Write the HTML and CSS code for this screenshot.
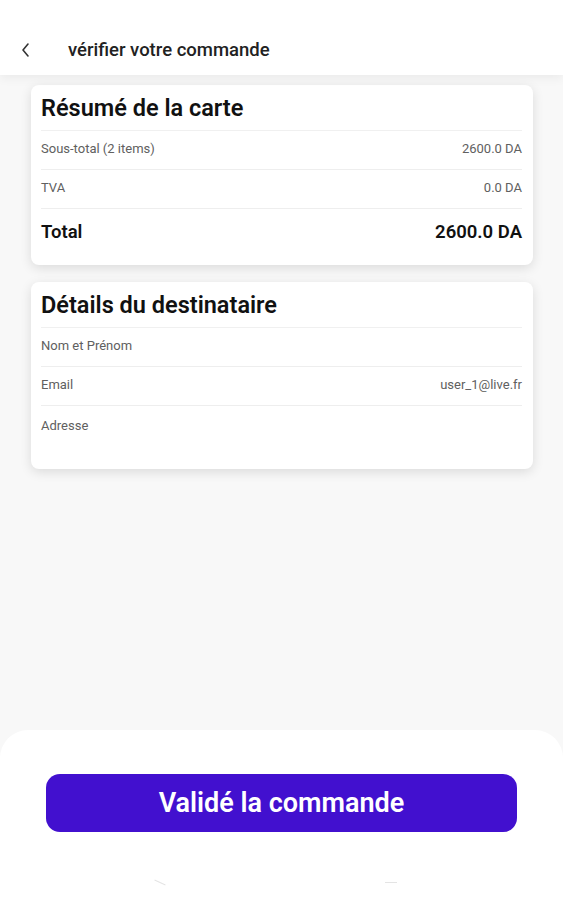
FILE: index.html
```html
<!DOCTYPE html>
<html lang="fr">
<head>
    <meta charset="UTF-8">
    <meta name="viewport" content="width=device-width, initial-scale=1.0">
    <title>vérifier votre commande</title>
    <link rel="stylesheet" href="styles.css">
</head>
<body>
    <!-- Top bar -->
    <header class="topbar">
        <button class="back-btn" aria-label="Retour">
            <svg width="12" height="16" viewBox="0 0 12 16">
                <path d="M8 2 L3 8 L8 14" fill="none" stroke="#333" stroke-width="1.6" stroke-linecap="round" stroke-linejoin="round"/>
            </svg>
        </button>
        <span class="topbar-title">vérifier votre commande</span>
    </header>

    <main class="content">
        <!-- Cart summary -->
        <section class="card">
            <h2 class="card-title">Résumé de la carte</h2>
            <div class="row">
                <span>Sous-total (2 items)</span>
                <span>2600.0 DA</span>
            </div>
            <div class="row">
                <span>TVA</span>
                <span>0.0 DA</span>
            </div>
            <div class="row total">
                <span>Total</span>
                <span>2600.0 DA</span>
            </div>
        </section>

        <!-- Recipient -->
        <section class="card">
            <h2 class="card-title">Détails du destinataire</h2>
            <div class="row">
                <span>Nom et Prénom</span>
                <span></span>
            </div>
            <div class="row">
                <span>Email</span>
                <span>user_1@live.fr</span>
            </div>
            <div class="row last">
                <span>Adresse</span>
                <span></span>
            </div>
        </section>
    </main>

    <footer class="sheet">
        <button class="confirm-btn">Validé la commande</button>
        <div class="sheet-marks">
            <span class="mark mark-left"></span>
            <span class="mark mark-right"></span>
        </div>
    </footer>
</body>
</html>
```

FILE: styles.css
```css
* {
    box-sizing: border-box;
}

body {
    font-family: Roboto, "Liberation Sans", Arial, sans-serif;
    margin: 0;
    padding: 0;
    width: 563px;
    height: 900px;
    background-color: #f8f8f8;
    display: flex;
    flex-direction: column;
    overflow: hidden;
}

.topbar {
    height: 75px;
    background-color: #fff;
    display: flex;
    align-items: center;
    padding: 24px 0 0 16px;
    box-shadow: 0 3px 10px rgba(0, 0, 0, 0.06);
    position: relative;
    z-index: 1;
}

.back-btn {
    background: none;
    border: none;
    padding: 0;
    width: 20px;
    height: 20px;
    display: flex;
    align-items: center;
    justify-content: center;
}

.topbar-title {
    margin-left: 32px;
    font-size: 18.5px;
    font-weight: 500;
    color: #222;
}

.content {
    flex: 1;
    padding: 10px 30px 0 31px;
    display: flex;
    flex-direction: column;
    gap: 17px;
}

.card {
    background-color: #fff;
    border-radius: 8px;
    padding: 0 11px 0 10px;
    box-shadow: 0 3px 12px rgba(0, 0, 0, 0.12);
}

.card-title {
    margin: 0;
    height: 46px;
    display: flex;
    align-items: center;
    padding-top: 1px;
    font-size: 23.5px;
    font-weight: 600;
    color: #111;
    border-bottom: 1px solid #f0f0f0;
}

.row {
    height: 39px;
    display: flex;
    justify-content: space-between;
    align-items: center;
    padding-bottom: 3px;
    font-size: 13px;
    color: #606060;
    border-bottom: 1px solid #eeeeee;
}

.row.total {
    height: 48px;
    border-bottom: none;
    font-size: 18.5px;
    font-weight: 600;
    color: #111;
    margin-bottom: 8px;
}

.row.last {
    border-bottom: none;
    height: 42px;
    margin-bottom: 21px;
}

.sheet {
    height: 170px;
    background-color: #fff;
    border-radius: 28px 28px 0 0;
    padding: 44px 46px 0 46px;
}

.confirm-btn {
    width: 100%;
    height: 58px;
    border: none;
    border-radius: 14px;
    background-color: #4210cf;
    color: #fff;
    font-family: Roboto, "Liberation Sans", Arial, sans-serif;
    font-size: 27px;
    font-weight: 600;
    cursor: pointer;
}

.sheet-marks {
    display: flex;
    justify-content: space-between;
    padding: 50px 120px 0 108px;
}

.mark {
    height: 1px;
    width: 12px;
    background-color: #e4e4e4;
}

.mark-left {
    transform: rotate(25deg);
}
```
